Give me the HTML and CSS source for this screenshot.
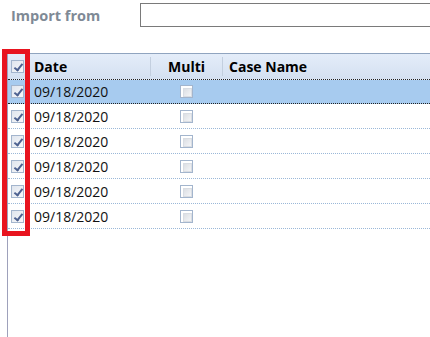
FILE: index.html
```html
<!DOCTYPE html>
<html lang="en">
<head>
    <meta charset="UTF-8">
    <title>Import</title>
    <link rel="stylesheet" href="styles.css">
</head>
<body>
<div class="top">
    <label class="lbl" for="src">Import from</label>
    <input type="text" id="src" class="src">
</div>

<div class="grid">
    <div class="row head">
        <div class="cell chk"><span class="box on"></span></div>
        <div class="cell date">Date</div>
        <div class="cell multi sep">Multi</div>
        <div class="cell name sep">Case Name</div>
    </div>
    <div class="row sel">
        <div class="cell chk"><span class="box on"></span></div>
        <div class="cell date">09/18/2020</div>
        <div class="cell multi"><span class="box off"></span></div>
        <div class="cell name"></div>
    </div>
    <div class="row">
        <div class="cell chk"><span class="box on"></span></div>
        <div class="cell date">09/18/2020</div>
        <div class="cell multi"><span class="box off"></span></div>
        <div class="cell name"></div>
    </div>
    <div class="row">
        <div class="cell chk"><span class="box on"></span></div>
        <div class="cell date">09/18/2020</div>
        <div class="cell multi"><span class="box off"></span></div>
        <div class="cell name"></div>
    </div>
    <div class="row">
        <div class="cell chk"><span class="box on"></span></div>
        <div class="cell date">09/18/2020</div>
        <div class="cell multi"><span class="box off"></span></div>
        <div class="cell name"></div>
    </div>
    <div class="row">
        <div class="cell chk"><span class="box on"></span></div>
        <div class="cell date">09/18/2020</div>
        <div class="cell multi"><span class="box off"></span></div>
        <div class="cell name"></div>
    </div>
    <div class="row">
        <div class="cell chk"><span class="box on"></span></div>
        <div class="cell date">09/18/2020</div>
        <div class="cell multi"><span class="box off"></span></div>
        <div class="cell name"></div>
    </div>
</div>

<!-- red highlight over the checkbox column -->
<div class="mark"></div>
</body>
</html>
```

FILE: styles.css
```css
body {
    margin: 0;
    font-family: "Open Sans", "Noto Sans", sans-serif;
    background: #fff;
    height: 337px;
    overflow: hidden;
    position: relative;
}

.top {
    display: flex;
    align-items: center;
    height: 24px;
    padding: 3px 0 0 11px;
    overflow: hidden;
}
.lbl {
    flex: none;
    width: 129px;
    font-size: 14.5px;
    font-weight: 700;
    color: #7f8a96;
}
.src {
    flex: 1;
    min-width: 0;
    height: 24px;
    box-sizing: border-box;
    border: 1px solid #7a7a7a;
    border-right: none;
    margin: 0 -10px 0 0;
    padding: 0;
    outline: none;
}

.grid {
    margin: 26px 0 0 7px;
    border-left: 1px solid #9ea1bb;
    height: 284px;
}

.row {
    display: grid;
    grid-template-columns: 22px 120px 72px 1fr;
    height: 24px;
    border-bottom: 1px dotted #9bb8d8;
    align-items: center;
    font-size: 14px;
    color: #111;
}
.head {
    height: 25px;
    border-top: 1px solid #90a4bf;
    border-bottom: 1px dotted #222;
    background: linear-gradient(to bottom, #e4edf9, #d4e0f1);
    font-weight: 700;
    color: #000;
}
.sel {
    height: 23px;
    background: #a7cbef;
    border-bottom: 1px dotted #222;
}

.cell {
    white-space: nowrap;
}
.chk {
    padding-left: 3px;
    display: flex;
}
.date {
    padding-left: 4px;
}
.multi {
    display: flex;
    justify-content: center;
}
.name {
    padding-left: 6px;
}
.sep {
    border-left: 1px solid #c3cfdf;
    height: 19px;
    line-height: 19px;
}

.box {
    display: block;
    width: 13px;
    height: 13px;
    box-sizing: border-box;
    border: 1px solid #a3b5cd;
    background: #fff;
    position: relative;
}
.box.on {
    background: linear-gradient(to bottom right, #dfe5ee, #f7f8fa);
}
.box.on::after {
    content: "";
    position: absolute;
    left: 4px;
    top: 1px;
    width: 3px;
    height: 7px;
    border: solid #4d6190;
    border-width: 0 2px 2px 0;
    transform: rotate(38deg);
}
.box.off::after {
    content: "";
    position: absolute;
    left: 2px;
    top: 2px;
    width: 7px;
    height: 7px;
    border: 1px solid #d9dde3;
    background: linear-gradient(to bottom right, #dcdfe4, #f4f5f7);
}

.mark {
    position: absolute;
    left: 2px;
    top: 49px;
    width: 18px;
    height: 177px;
    border: 5px solid #e8141f;
}
```
